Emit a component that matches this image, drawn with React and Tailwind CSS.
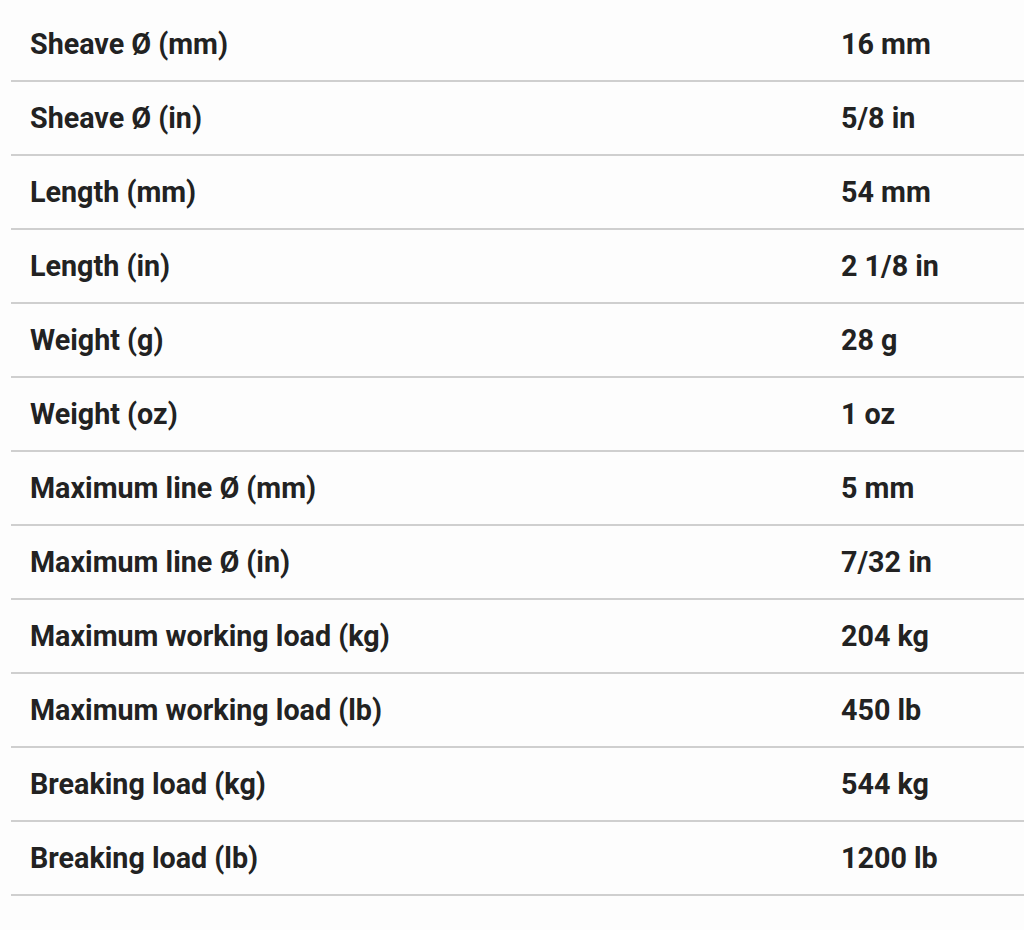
import React from 'react';

const specs = [
  ['Sheave Ø (mm)', '16 mm'],
  ['Sheave Ø (in)', '5/8 in'],
  ['Length (mm)', '54 mm'],
  ['Length (in)', '2 1/8 in'],
  ['Weight (g)', '28 g'],
  ['Weight (oz)', '1 oz'],
  ['Maximum line Ø (mm)', '5 mm'],
  ['Maximum line Ø (in)', '7/32 in'],
  ['Maximum working load (kg)', '204 kg'],
  ['Maximum working load (lb)', '450 lb'],
  ['Breaking load (kg)', '544 kg'],
  ['Breaking load (lb)', '1200 lb'],
];

export default function App() {
  return (
    <div className="min-h-[930px] bg-[#fdfdfd] pt-[8px] pl-[11px] font-['Roboto',sans-serif] text-[#222]">
      {specs.map(([label, value]) => (
        <div key={label} className="flex h-[74px] items-center border-b-2 border-[#cfcfcf] pt-[1px] text-[28.7px] font-bold leading-none">
          <div className="w-[811px] pl-[19px]">{label}</div>
          <div className="pl-[19px]">{value}</div>
        </div>
      ))}
    </div>
  );
}
